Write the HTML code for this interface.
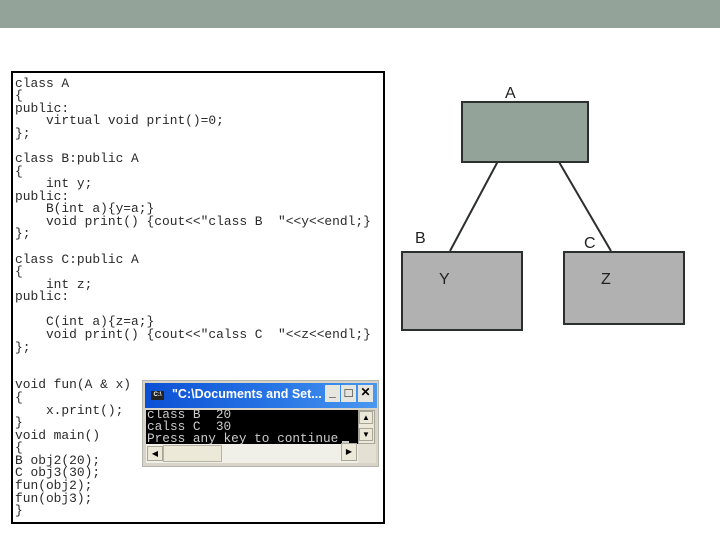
<!DOCTYPE html>
<html>
<head>
<meta charset="utf-8">
<style>
html,body{margin:0;padding:0;background:#fff}
body{position:relative;width:720px;height:540px;overflow:hidden;font-family:"Liberation Sans",sans-serif}
div{position:absolute;box-sizing:border-box}
#bar{left:0;top:0;width:720px;height:28px;background:#94a39a}
#code{left:11px;top:71px;width:374px;height:453px;border:2px solid #000;background:#fff}
pre{position:absolute;margin:0;font-family:"Liberation Mono",monospace}
#src{left:15px;top:77.5px;font-size:12.9px;line-height:12.58px;color:#2a2a2a;filter:blur(.35px)}
.box{border:2px solid #2b2f2e}
.l{font-size:16px;line-height:18px;color:#222}
#con{left:142px;top:380px;width:237px;height:87px;background:#d8d5c8;border:1px solid #b5b5ae}
#title{left:2px;top:2px;width:232px;height:25px;background:linear-gradient(90deg,#0b50d4,#2a78e6 60%,#4a98f0);color:#fff;font-weight:bold;font-size:12.5px;line-height:23px;white-space:nowrap}
#title span{position:absolute;left:27px;top:0}
.ic{left:6px;top:8px;width:13px;height:9px;background:#222;color:#fff;font-size:6px;line-height:9px;text-align:center;font-weight:bold}
.b{top:2px;width:15px;height:17px;background:#e6e6de;color:#000;text-align:center;font-weight:bold;font-size:12px;line-height:15px}
#term{left:3px;top:29px;width:212px;height:34px;background:#000;overflow:hidden}
#term pre{left:1px;top:-1px;color:#ccc;font-size:12.75px;line-height:11.8px;filter:blur(.25px)}
#cur{left:199px;top:31px;width:7px;height:3px;background:#ccc}
.sb{background:#ece9d8;border:1px solid #a8a698;color:#000;font-size:8px;text-align:center;line-height:14px}
</style>
</head>
<body>
<div id="bar"></div>
<div id="code"></div>
<pre id="src">class A
{
public:
    virtual void print()=0;
};

class B:public A
{
    int y;
public:
    B(int a){y=a;}
    void print() {cout&lt;&lt;"class B  "&lt;&lt;y&lt;&lt;endl;}
};

class C:public A
{
    int z;
public:

    C(int a){z=a;}
    void print() {cout&lt;&lt;"calss C  "&lt;&lt;z&lt;&lt;endl;}
};


void fun(A &amp; x)
{
    x.print();
}
void main()
{
B obj2(20);
C obj3(30);
fun(obj2);
fun(obj3);
}</pre>

<div id="con">
  <div id="title"><div class="ic">C:\</div><span>"C:\Documents and Set...</span>
    <div class="b" style="left:180px">_</div>
    <div class="b" style="left:196px;font-size:13px">□</div>
    <div class="b" style="left:213px">✕</div>
  </div>
  <div id="term"><pre>class B  20
calss C  30
Press any key to continue</pre><div id="cur" style="left:196px"></div></div>
  <div class="sb" style="left:215px;top:29px;width:17px;height:34px"></div>
  <div class="sb" style="left:216px;top:30px;width:14px;height:13px;line-height:12px">▲</div>
  <div class="sb" style="left:216px;top:47px;width:14px;height:13px;line-height:12px">▼</div>
  <div style="left:3px;top:63px;width:212px;height:19px;background:#f1f0e8"></div>
  <div class="sb" style="left:4px;top:65px;width:16px;height:15px;line-height:13px">◀</div>
  <div style="left:20px;top:64px;width:59px;height:17px;background:#ece9d8;border:1px solid #b5b3a6"></div>
  <div class="sb" style="left:198px;top:62px;width:16px;height:18px;line-height:16px">▶</div>
  <div style="left:215px;top:63px;width:18px;height:19px;background:#e4e1d4"></div>
</div>

<svg width="720" height="540" style="position:absolute;left:0;top:0">
  <line x1="497.5" y1="162" x2="450" y2="251" stroke="#2b2f2e" stroke-width="2"/>
  <line x1="559" y1="162" x2="611" y2="251" stroke="#2b2f2e" stroke-width="2"/>
</svg>
<div class="box" style="left:461px;top:101px;width:128px;height:62px;background:#93a399"></div>
<div class="box" style="left:401px;top:251px;width:122px;height:80px;background:#b1b1b1"></div>
<div class="box" style="left:563px;top:251px;width:122px;height:74px;background:#b1b1b1"></div>
<div class="l" style="left:505px;top:85px">A</div>
<div class="l" style="left:415px;top:230px">B</div>
<div class="l" style="left:584px;top:235px">C</div>
<div class="l" style="left:439px;top:271px">Y</div>
<div class="l" style="left:601px;top:271px">Z</div>
</body>
</html>
